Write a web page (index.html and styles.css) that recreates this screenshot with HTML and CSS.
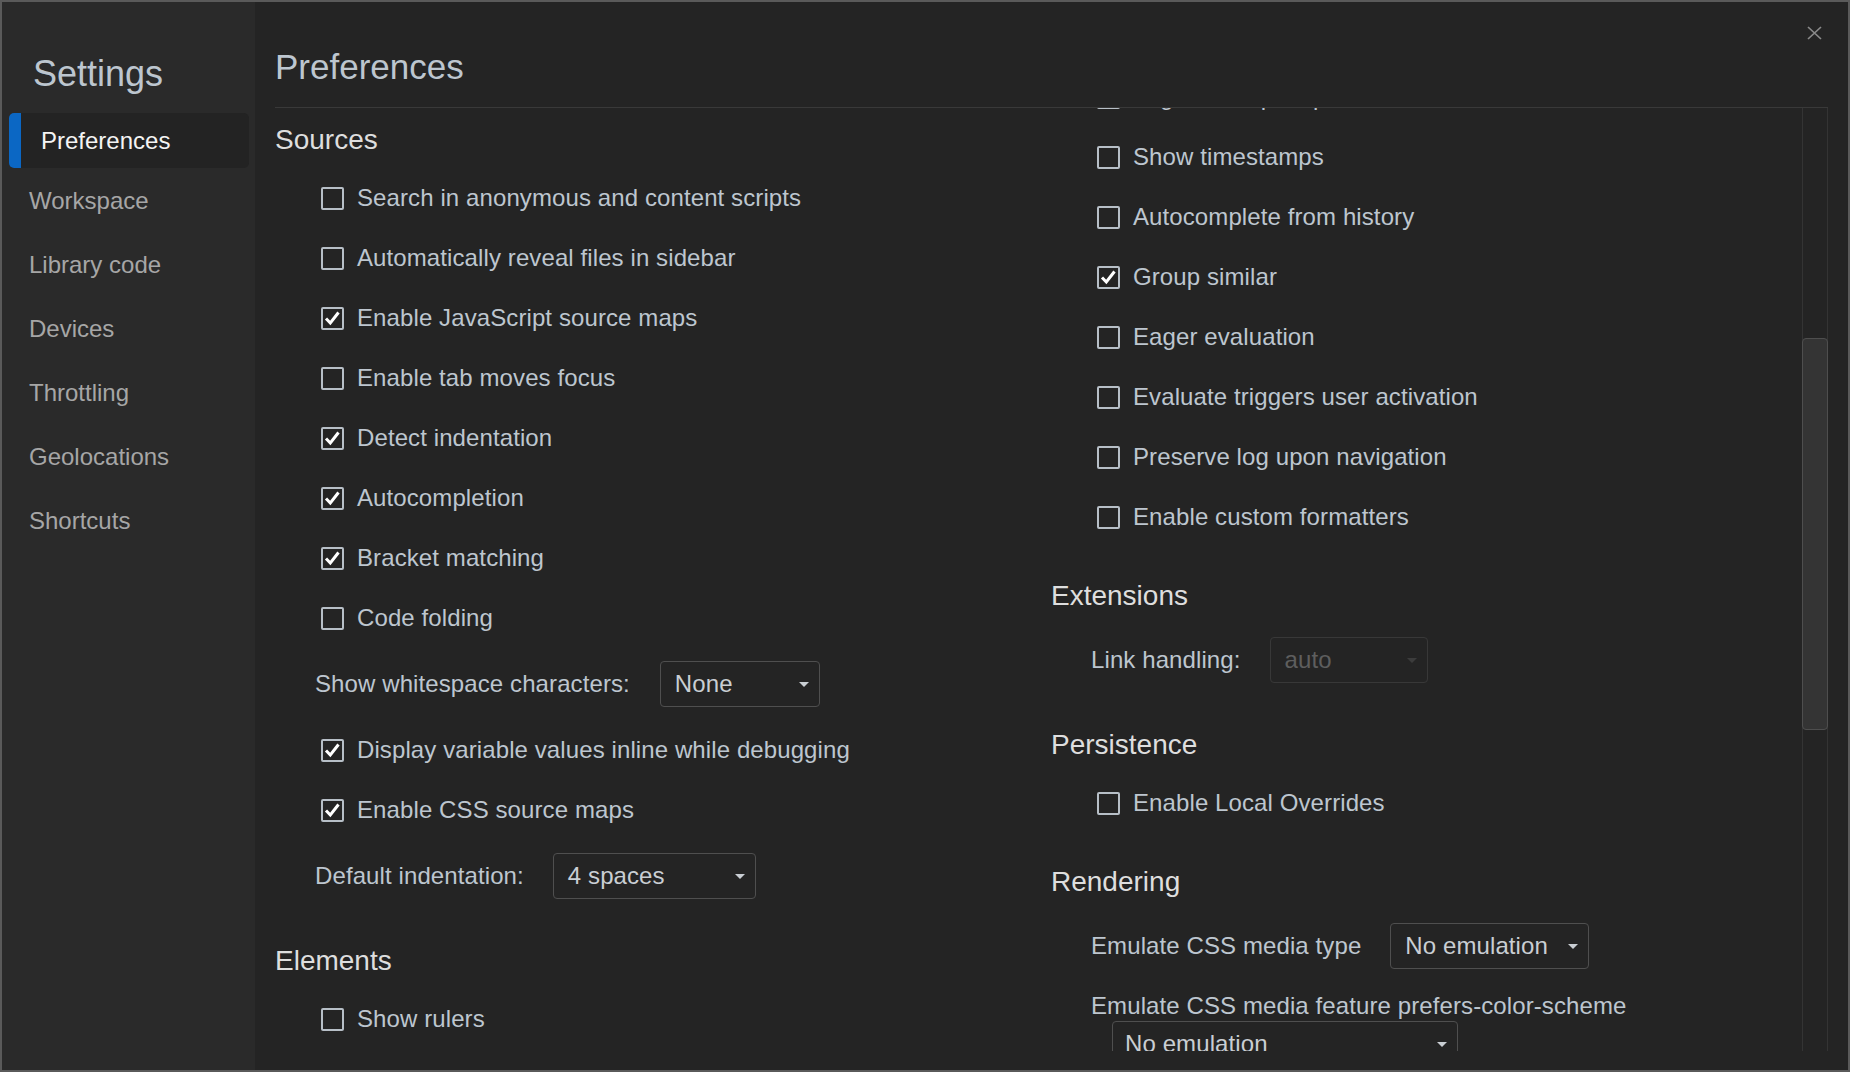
FILE: index.html
```html
<!DOCTYPE html>
<html lang="en">
<head>
<meta charset="utf-8">
<title>Settings</title>
<link rel="stylesheet" href="styles.css">
</head>
<body>
<div class="window">
  <aside class="sidebar">
    <h1 class="side-title">Settings</h1>
    <nav class="nav">
      <div class="nav-item active">Preferences</div>
      <div class="nav-item">Workspace</div>
      <div class="nav-item">Library code</div>
      <div class="nav-item">Devices</div>
      <div class="nav-item">Throttling</div>
      <div class="nav-item">Geolocations</div>
      <div class="nav-item">Shortcuts</div>
    </nav>
  </aside>
  <main class="main">
    <button class="close" aria-label="Close">
      <svg width="15" height="14" viewBox="0 0 15 14"><path d="M1 1 L14 13 M14 1 L1 13" stroke="#8a8a8a" stroke-width="1.7" fill="none"/></svg>
    </button>
    <header class="header"><h2 class="page-title">Preferences</h2></header>
    <div class="scroll">
      <div class="columns">
        <div class="col">
          <section class="section">
            <h3 class="sec-title">Sources</h3>
            <div class="cb-row"><span class="cb"></span><span>Search in anonymous and content scripts</span></div>
            <div class="cb-row"><span class="cb"></span><span>Automatically reveal files in sidebar</span></div>
            <div class="cb-row"><span class="cb on"><svg viewBox="0 0 19 19" width="19" height="19"><path d="M3 9.5 L7.3 14 L15.5 3.5" stroke="#fff" stroke-width="3" fill="none"/></svg></span><span>Enable JavaScript source maps</span></div>
            <div class="cb-row"><span class="cb"></span><span>Enable tab moves focus</span></div>
            <div class="cb-row"><span class="cb on"><svg viewBox="0 0 19 19" width="19" height="19"><path d="M3 9.5 L7.3 14 L15.5 3.5" stroke="#fff" stroke-width="3" fill="none"/></svg></span><span>Detect indentation</span></div>
            <div class="cb-row"><span class="cb on"><svg viewBox="0 0 19 19" width="19" height="19"><path d="M3 9.5 L7.3 14 L15.5 3.5" stroke="#fff" stroke-width="3" fill="none"/></svg></span><span>Autocompletion</span></div>
            <div class="cb-row"><span class="cb on"><svg viewBox="0 0 19 19" width="19" height="19"><path d="M3 9.5 L7.3 14 L15.5 3.5" stroke="#fff" stroke-width="3" fill="none"/></svg></span><span>Bracket matching</span></div>
            <div class="cb-row"><span class="cb"></span><span>Code folding</span></div>
            <div class="sel-row"><span>Show whitespace characters:</span><div class="select sel-none"><span>None</span><i class="arrow"></i></div></div>
            <div class="cb-row"><span class="cb on"><svg viewBox="0 0 19 19" width="19" height="19"><path d="M3 9.5 L7.3 14 L15.5 3.5" stroke="#fff" stroke-width="3" fill="none"/></svg></span><span>Display variable values inline while debugging</span></div>
            <div class="cb-row"><span class="cb on"><svg viewBox="0 0 19 19" width="19" height="19"><path d="M3 9.5 L7.3 14 L15.5 3.5" stroke="#fff" stroke-width="3" fill="none"/></svg></span><span>Enable CSS source maps</span></div>
            <div class="sel-row"><span>Default indentation:</span><div class="select sel-indent"><span>4 spaces</span><i class="arrow"></i></div></div>
          </section>
          <section class="section">
            <h3 class="sec-title">Elements</h3>
            <div class="cb-row"><span class="cb"></span><span>Show rulers</span></div>
          </section>
        </div>
        <div class="col col-right">
          <section class="section">
            <div class="cb-row"><span class="cb"></span><span>Log XMLHttpRequests</span></div>
            <div class="cb-row"><span class="cb"></span><span>Show timestamps</span></div>
            <div class="cb-row"><span class="cb"></span><span>Autocomplete from history</span></div>
            <div class="cb-row"><span class="cb on"><svg viewBox="0 0 19 19" width="19" height="19"><path d="M3 9.5 L7.3 14 L15.5 3.5" stroke="#fff" stroke-width="3" fill="none"/></svg></span><span>Group similar</span></div>
            <div class="cb-row"><span class="cb"></span><span>Eager evaluation</span></div>
            <div class="cb-row"><span class="cb"></span><span>Evaluate triggers user activation</span></div>
            <div class="cb-row"><span class="cb"></span><span>Preserve log upon navigation</span></div>
            <div class="cb-row"><span class="cb"></span><span>Enable custom formatters</span></div>
          </section>
          <section class="section">
            <h3 class="sec-title">Extensions</h3>
            <div class="sel-row"><span>Link handling:</span><div class="select sel-auto disabled"><span>auto</span><i class="arrow"></i></div></div>
          </section>
          <section class="section">
            <h3 class="sec-title">Persistence</h3>
            <div class="cb-row"><span class="cb"></span><span>Enable Local Overrides</span></div>
          </section>
          <section class="section">
            <h3 class="sec-title">Rendering</h3>
            <div class="sel-row"><span>Emulate CSS media type</span><div class="select sel-media"><span>No emulation</span><i class="arrow"></i></div></div>
            <div class="stack-row">
              <div class="stack-label">Emulate CSS media feature prefers-color-scheme</div>
              <div class="select sel-scheme"><span>No emulation</span><i class="arrow"></i></div>
            </div>
          </section>
        </div>
      </div>
      <div class="track"><div class="thumb"></div></div>
    </div>
  </main>
</div>
</body>
</html>
```

FILE: styles.css
```css
* {
  box-sizing: border-box;
  margin: 0;
  padding: 0;
}

html, body {
  width: 1850px;
  height: 1072px;
  overflow: hidden;
  background: #242424;
  font-family: "Liberation Sans", Arial, Helvetica, sans-serif;
}

.window {
  width: 1850px;
  height: 1072px;
  border: 2px solid #5a5a5a;
  display: flex;
  background: #242424;
}

/* Sidebar */
.sidebar {
  width: 253px;
  flex-shrink: 0;
  background: #2a2a2a;
}

.side-title {
  font-size: 36px;
  font-weight: normal;
  line-height: 44px;
  color: #bdc6cf;
  padding: 50px 0 0 31px;
}

.nav {
  margin-top: 17px;
}

.nav-item {
  height: 64px;
  line-height: 64px;
  font-size: 24px;
  color: #a6a6a6;
  padding-left: 27px;
}

.nav-item.active {
  position: relative;
  overflow: hidden;
  height: 55px;
  line-height: 55px;
  margin: 0 6px 1px 7px;
  padding-left: 32px;
  background: #232323;
  color: #f4f4f4;
  border-radius: 5px;
}

.nav-item.active::before {
  content: "";
  position: absolute;
  left: 0;
  top: 0;
  bottom: 0;
  width: 12px;
  background: #0b67c4;
}

/* Main */
.main {
  flex: 1;
  min-width: 0;
  position: relative;
  display: flex;
  flex-direction: column;
  padding: 0 20px 19px 20px;
}

.close {
  position: absolute;
  right: 26px;
  top: 24px;
  width: 15px;
  height: 14px;
  border: none;
  background: transparent;
  display: flex;
}

.header {
  padding: 45px 0 20px 0;
  border-bottom: 1px solid #393939;
}

.page-title {
  font-size: 35px;
  font-weight: normal;
  line-height: 40px;
  color: #bdc6cf;
}

.scroll {
  flex: 1;
  min-height: 0;
  display: flex;
  overflow: hidden;
}

.columns {
  flex: 1;
  display: grid;
  grid-template-columns: 776px 1fr;
  align-items: start;
  overflow: hidden;
}

.col-right {
  margin-top: -41px;
}

.track {
  width: 26px;
  flex-shrink: 0;
  border-left: 1px solid #343434;
  border-right: 1px solid #343434;
  padding-top: 230px;
}

.thumb {
  height: 392px;
  margin: 0 -1px;
  background: #343434;
  border: 1px solid #4e4e4e;
  border-radius: 4px;
}

/* Sections */
.section + .section {
  padding-top: 17px;
}

.sec-title {
  font-size: 28px;
  font-weight: normal;
  line-height: 32px;
  color: #dedede;
  margin: 16px 0 12px 0;
}

.cb-row {
  display: flex;
  align-items: center;
  height: 60px;
  padding-left: 46px;
  font-size: 24px;
  line-height: 28px;
  letter-spacing: 0.1px;
  color: #bdc6cf;
  white-space: nowrap;
}

.cb {
  width: 23px;
  height: 23px;
  flex-shrink: 0;
  border: 2px solid #b7bfc7;
  border-radius: 2px;
  margin-right: 13px;
  display: flex;
}

.sel-row {
  display: flex;
  align-items: center;
  height: 72px;
  padding-left: 40px;
  font-size: 24px;
  line-height: 28px;
  letter-spacing: 0.1px;
  color: #bdc6cf;
  white-space: nowrap;
}

.select {
  height: 46px;
  flex-shrink: 0;
  border: 1px solid #4f4f4f;
  border-radius: 4px;
  display: flex;
  align-items: center;
  justify-content: space-between;
  padding: 0 10px 0 14px;
  margin-left: 29px;
  font-size: 24px;
  line-height: 28px;
  color: #c9ced3;
}

.arrow {
  width: 0;
  height: 0;
  border-left: 5.5px solid transparent;
  border-right: 5.5px solid transparent;
  border-top: 5px solid #c9ced3;
}

.sel-none { width: 160px; margin-left: 30px; }
.sel-indent { width: 203px; }
.sel-auto { width: 158px; }
.sel-media { width: 199px; }

.select.disabled {
  border-color: #383838;
  color: #5e5e5e;
}

.select.disabled .arrow {
  border-top-color: #3c3c3c;
}

.stack-row {
  padding: 10px 0 0 40px;
  font-size: 24px;
  line-height: 28px;
  letter-spacing: 0.1px;
  color: #bdc6cf;
  white-space: nowrap;
}

.sel-scheme {
  width: 346px;
  margin: 1px 0 0 21px;
  padding-left: 12px;
}
```
